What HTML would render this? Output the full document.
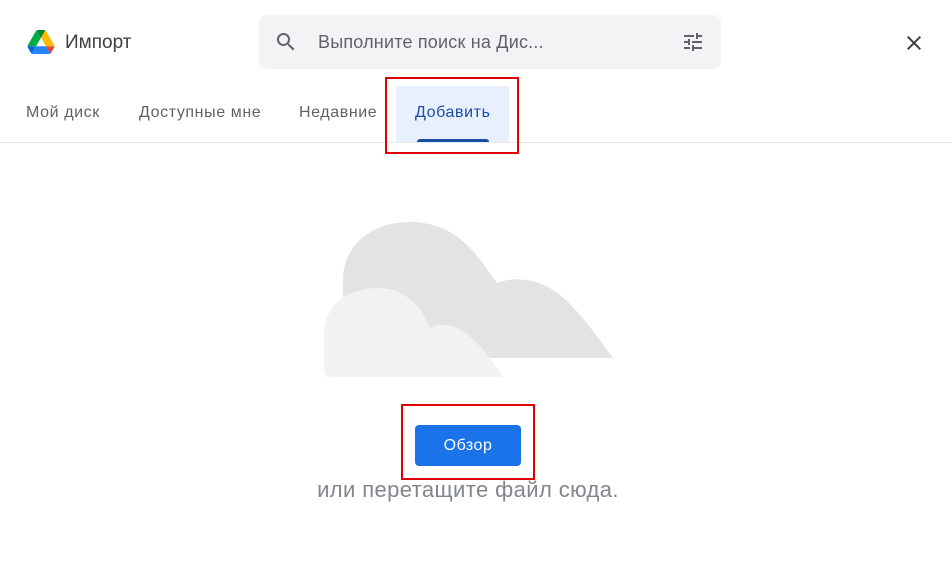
<!DOCTYPE html>
<html><head><meta charset="utf-8"><style>
body{margin:0;width:952px;height:587px;background:#fff;font-family:"Liberation Sans",sans-serif;position:relative;overflow:hidden}
.a{position:absolute}
.tab{position:absolute;top:104px;font-size:16px;letter-spacing:0.6px;color:#5f6368}
</style></head><body>
<svg class="a" style="left:27px;top:30px" width="28" height="24" viewBox="0 0 87.3 78"><path d="m6.6 66.85 3.850 6.65c.8 1.4 1.95 2.5 3.3 3.3l13.75-23.8h-27.5c0 1.55.4 3.1 1.2 4.5z" fill="#0066da"/><path d="m43.65 25-13.75-23.8c-1.35.8-2.5 1.9-3.3 3.3l-25.4 44a9.06 9.06 0 0 0 -1.2 4.5h27.5z" fill="#00ac47"/><path d="m73.55 76.8c1.35-.8 2.5-1.9 3.3-3.3l1.6-2.750 7.65-13.25c.8-1.4 1.2-2.95 1.2-4.5h-27.502l5.852 11.5z" fill="#ea4335"/><path d="m43.65 25 13.75-23.8c-1.35-.8-2.9-1.2-4.5-1.2h-18.5c-1.6 0-3.150.45-4.5 1.2z" fill="#00832d"/><path d="m59.8 53h-32.3l-13.75 23.8c1.35.8 2.9 1.2 4.5 1.2h50.8c1.6 0 3.15-.45 4.5-1.2z" fill="#2684fc"/><path d="m73.4 26.5-12.7-22c-.8-1.4-1.95-2.5-3.3-3.3l-13.75 23.8 16.15 28h27.45c0-1.55-.4-3.1-1.2-4.5z" fill="#ffba00"/></svg>
<div class="a" style="left:65px;top:32px;font-size:19px;color:#3c4043">Импорт</div>
<div class="a" style="left:259px;top:15px;width:462px;height:54px;background:#f1f3f4;border-radius:8px"></div>
<svg class="a" style="left:274px;top:30px" width="24" height="24" viewBox="0 0 24 24"><path d="M15.5 14h-.79l-.28-.27A6.47 6.47 0 0 0 16 9.5 6.5 6.5 0 1 0 9.5 16c1.61 0 3.09-.59 4.23-1.57l.27.28v.79l5 4.99L20.490 19l-4.99-5zm-6 0C7.01 14 5 11.99 5 9.5S7.01 5 9.5 5 14 7.01 14 9.5 11.99 14 9.5 14z" fill="#5f6368"/></svg>
<div class="a" style="left:318px;top:32px;font-size:18px;letter-spacing:0.2px;color:#5f6368">Выполните поиск на Дис...</div>
<svg class="a" style="left:681px;top:30px" width="24" height="24" viewBox="0 0 24 24"><path d="M3 17v2h6v-2H3zM3 5v2h10V5H3zm10 16v-2h8v-2h-8v-2h-2v6h2zM7 9v2H3v2h4v2h2V9H7zm14 4v-2H11v2h10zm-6-4h2V7h4V5h-4V3h-2v6z" fill="#5f6368"/></svg>
<svg class="a" style="left:902px;top:31px" width="24" height="24" viewBox="0 0 24 24"><path d="M19 6.41 17.59 5 12 10.59 6.41 5 5 6.41 10.59 12 5 17.59 6.41 19 12 13.41 17.59 19 19 17.59 13.41 12z" fill="#3c4043"/></svg>
<div class="tab" style="left:26px">Мой диск</div>
<div class="tab" style="left:139px">Доступные мне</div>
<div class="tab" style="left:299px">Недавние</div>
<div class="a" style="left:396px;top:86px;width:113px;height:57px;background:#e8f0fe"></div>
<div class="tab" style="left:415px;color:#174ea6">Добавить</div>
<div class="a" style="left:417px;top:139px;width:72px;height:4px;background:#174ea6;border-radius:3px 3px 0 0"></div>
<div class="a" style="left:0;top:142px;width:952px;height:1px;background:#e8eaed"></div>
<div class="a" style="left:385px;top:77px;width:130px;height:73px;border:2px solid #e00000"></div>
<svg class="a" style="left:0;top:0" width="952" height="587"><path d="M343,358 L343,280 C343,245 372,222 410,222 C445,222 465,240 482,262 L497,283 C505,280 515,278 525,280 C555,283 575,305 613,358 Z" fill="#e2e3e5"/><path d="M330,377 C324,377 324,372 324,360 L324,335 C324,305 348,288 378,288 C400,288 413,300 422,312 L430,328 C435,325 445,323 455,327 C470,333 485,350 503,377 Z" fill="#f1f2f3"/></svg>
<div class="a" style="left:401px;top:404px;width:130px;height:72px;border:2px solid #e00000"></div>
<div class="a" style="left:415px;top:425px;width:106px;height:41px;background:#1a73e8;border-radius:4px;color:#fff;font-size:16px;letter-spacing:0.5px;text-align:center;line-height:41px">Обзор</div>
<div class="a" style="left:218px;top:477px;width:500px;text-align:center;font-size:22px;letter-spacing:0.4px;color:#80868b">или перетащите файл сюда.</div>
</body></html>
